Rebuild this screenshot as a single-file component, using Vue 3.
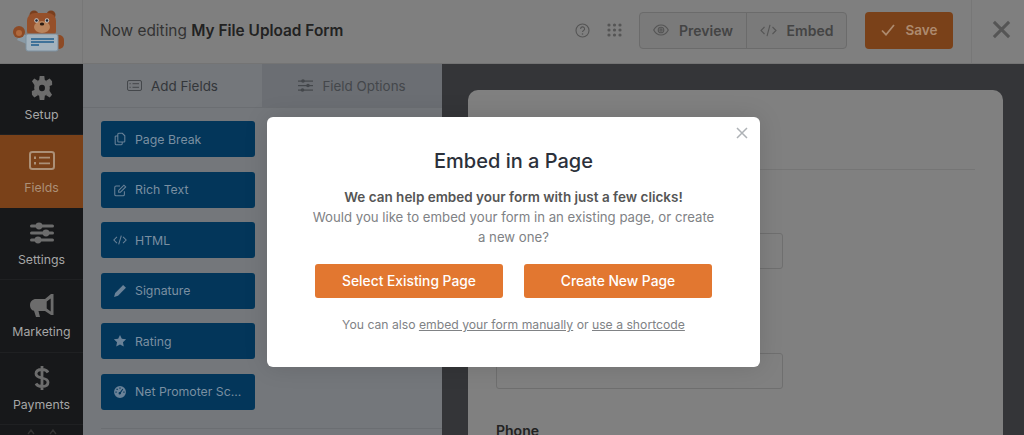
<script setup>
const navItems = [
  { label: 'Setup', icon: 'setup' },
  { label: 'Fields', icon: 'fields', active: true },
  { label: 'Settings', icon: 'settings' },
  { label: 'Marketing', icon: 'marketing' },
  { label: 'Payments', icon: 'payments' },
]

const fields = [
  { label: 'Page Break', d: 'M6.5 1.500h4.200l2.800 2.800v6.200a1 1 0 0 1-1 1h-6a1 1 0 0 1-1-1v-8a1 1 0 0 1 1-1z M5.500 4.500h-2a1 1 0 0 0-1 1v8a1 1 0 0 0 1 1h6a1 1 0 0 0 1-1v-2' },
  { label: 'Rich Text', d: 'M13 9.500v3.500a1.500 1.500 0 0 1-1.500 1.500h-8A1.500 1.500 0 0 1 2 13V5a1.500 1.500 0 0 1 1.500-1.500H8 M6.500 8.500l6-6 2 2-6 6h-2z' },
  { label: 'HTML', d: 'M4.500 4.500L1 8l3.500 3.500 M11.500 4.500L15 8l-3.500 3.500 M9.500 3l-3 10' },
  { label: 'Signature', d: 'M11.600 1.200l3.200 3.200-9.100 9.100-4.500 1.300 1.300-4.500z', solid: true },
  { label: 'Rating', d: 'M8 1l2.100 4.500 4.900.6-3.600 3.400.9 4.900L8 11.900l-4.300 2.500.9-4.900L1 6.100l4.900-.6z', solid: true },
  { label: 'Net Promoter Sc...', d: 'M8 1.200a6.800 6.800 0 1 0 0 13.600A6.800 6.800 0 0 0 8 1.200z M7.300 2.800h1.400v1.400H7.300z M4 4.200h1.400v1.400H4z M2.800 7.500h1.400v1.400H2.800z M11.800 7.500h1.400v1.400h-1.400z M10.800 4.200l.9.700-2.600 4a1.400 1.400 0 1 1-1-.9z', solid: true },
]
</script>

<template>
  <div class="page">
    <header class="topbar">
      <div class="logo">
        <svg width="60" height="48" viewBox="0 0 60 48">
          <path d="M4 32l12 5 3-7-11-5z" fill="#8a9aa5" />
          <circle cx="6" cy="24" r="6" fill="#8d4a25" />
          <circle cx="6" cy="25" r="3" fill="#b06a3e" />
          <rect x="41" y="27" width="10" height="14" rx="5" fill="#8d4a25" />
          <circle cx="21" cy="7" r="4.500" fill="#7a3f1e" />
          <circle cx="38" cy="7" r="4.500" fill="#7a3f1e" />
          <rect x="14" y="5" width="29" height="26" rx="8" fill="#96502a" />
          <ellipse cx="29" cy="19" rx="8" ry="6" fill="#b9845c" />
          <circle cx="23.500" cy="12.500" r="2.200" fill="#c9c9c9" />
          <circle cx="34" cy="12.500" r="2.200" fill="#c9c9c9" />
          <circle cx="23.500" cy="12.500" r="1.300" fill="#1c2430" />
          <circle cx="34" cy="12.500" r="1.300" fill="#1c2430" />
          <ellipse cx="29" cy="16" rx="2.200" ry="1.500" fill="#2a1b12" />
          <rect x="13" y="26" width="32" height="17" rx="2" fill="#a3b2bd" stroke="#7d909f" />
          <path d="M18 31h23M18 34h23M18 37h8" stroke="#1f5d8d" stroke-width="1.400" />
        </svg>
      </div>
      <div class="title">Now editing <strong>My File Upload Form</strong></div>
      <div class="tools">
        <svg class="help" width="15" height="15" viewBox="0 0 15 15">
          <circle cx="7.500" cy="7.500" r="6.500" fill="none" stroke="#555" stroke-width="1.100" />
          <path d="M5.600 5.900a2 2 0 1 1 3 1.700c-.7.4-1.100.8-1.100 1.500" fill="none" stroke="#555" stroke-width="1.100" />
          <circle cx="7.500" cy="11" r=".8" fill="#555" />
        </svg>
        <svg class="apps" width="15" height="14" viewBox="0 0 15 14" fill="#555">
          <circle cx="2" cy="2" r="1.600" /><circle cx="7.500" cy="2" r="1.600" /><circle cx="13" cy="2" r="1.600" />
          <circle cx="2" cy="7" r="1.600" /><circle cx="7.500" cy="7" r="1.600" /><circle cx="13" cy="7" r="1.600" />
          <circle cx="2" cy="12" r="1.600" /><circle cx="7.500" cy="12" r="1.600" /><circle cx="13" cy="12" r="1.600" />
        </svg>
        <div class="btn-group">
          <button class="tool-btn preview">
            <svg width="16" height="12" viewBox="0 0 16 12" fill="none" stroke="#555" stroke-width="1.100">
              <path d="M.7 6C2.400 2.800 5 1 8 1s5.600 1.800 7.300 5C13.600 9.200 11 11 8 11S2.400 9.200.7 6z" />
              <circle cx="8" cy="6" r="2.800" />
              <circle cx="8" cy="6" r="1.100" />
            </svg>
            Preview
          </button>
          <button class="tool-btn embed">
            <svg width="17" height="13" viewBox="0 0 17 13" fill="none" stroke="#555" stroke-width="1.100">
              <path d="M4.500 3L1 6.500 4.500 10M12.500 3L16 6.500 12.500 10M10 .8L7 12.200" />
            </svg>
            Embed
          </button>
        </div>
        <button class="save">
          <svg width="14" height="12" viewBox="0 0 14 12" fill="none" stroke="#ad8a6e" stroke-width="1.800">
            <path d="M1 6.500l4 4.200L13 1" />
          </svg>
          Save
        </button>
      </div>
      <div class="exit">
        <svg width="19" height="19" viewBox="0 0 20 20" stroke="#555" stroke-width="3.200">
          <path d="M2 2l16 16M18 2L2 18" />
        </svg>
      </div>
    </header>

    <div class="builder">
      <nav class="sidebar">
        <div v-for="item in navItems" :key="item.label" class="nav-item" :class="{ active: item.active }">
          <div class="nav-icon">
            <svg v-if="item.icon === 'setup'" width="24" height="26" viewBox="0 0 26 26" preserveAspectRatio="none" fill="#6c6c6c">
              <path fill-rule="evenodd" d="M13 4.500a8.500 8.500 0 1 0 0 17 8.500 8.500 0 0 0 0-17zm0 5.300a3.200 3.200 0 1 1 0 6.400 3.200 3.200 0 0 1 0-6.400z" />
              <path d="M10.500 1h5l.6 4.500h-6.200zM10.500 25h5l.6-4.500h-6.200z" />
              <path d="M2.100 6.200l2.500-2.700 4 2.300-3.100 5.300zM23.900 19.800l-2.500 2.700-4-2.300 3.100-5.300z" />
              <path d="M2.100 19.800l-.1-3.900 3.500-1.200 3.100 5.500-3.900 2.400zM23.900 6.200l.1 3.900-3.500 1.200-3.100-5.500 3.900-2.400z" />
            </svg>
            <svg v-else-if="item.icon === 'fields'" width="26" height="19" viewBox="0 0 26 20" preserveAspectRatio="none" fill="none" stroke="#ac9077" stroke-width="2">
              <rect x="1" y="1" width="24" height="18" rx="2.500" />
              <path d="M10 7h11M10 13h11" />
              <path d="M5 7h2M5 13h2" stroke-width="2.600" />
            </svg>
            <svg v-else-if="item.icon === 'settings'" width="24" height="22" viewBox="0 0 24 22" fill="#6c6c6c">
              <rect y="2.500" width="24" height="3" rx="1.500" />
              <rect y="9.500" width="24" height="3" rx="1.500" />
              <rect y="16.500" width="24" height="3" rx="1.500" />
              <circle cx="9" cy="4" r="3.400" />
              <circle cx="16" cy="11" r="3.400" />
              <circle cx="8" cy="18" r="3.400" />
            </svg>
            <svg v-else-if="item.icon === 'marketing'" width="24" height="23" viewBox="0 0 24 23" fill="#6c6c6c">
              <path fill-rule="evenodd" d="M21 0h2.500v21H21l-6-4H8.500l1.500 6H6l-2-6.300C1.500 16.500 0 14 0 11c0-3.600 2.700-6 6-6h9zm-.300 4.500l-4 3v7l4 3z" />
            </svg>
            <svg v-else width="16" height="26" viewBox="0 0 16 26" fill="none" stroke="#6c6c6c" stroke-width="2.800">
              <path d="M14 7.500C13 5.500 11 4.500 8 4.500 4.500 4.500 2 6 2 8.800c0 6 12 2.400 12 8.400 0 2.800-2.500 4.300-6 4.300-3 0-5-1-6-3M8 1v24" />
            </svg>
          </div>
          <span>{{ item.label }}</span>
        </div>
        <div class="nav-more">
          <svg width="40" height="6" viewBox="0 0 40 6" fill="none" stroke="#333" stroke-width="1.400">
            <path d="M6 5l3-4 3 4M28 5l3-4 3 4" />
          </svg>
        </div>
      </nav>

      <section class="panel">
        <div class="tabs">
          <div class="tab">
            <svg width="15" height="11" viewBox="0 0 15 11" fill="none" stroke="#44474b" stroke-width="1">
              <rect x=".5" y=".5" width="14" height="10" rx="1.500" />
              <path d="M5.500 3.700h6.500M5.500 7.300h6.500M2.500 3.700h1.200M2.500 7.300h1.200" />
            </svg>
            Add Fields
          </div>
          <div class="tab other">
            <svg width="15" height="13" viewBox="0 0 15 13" fill="#44474b">
              <rect y="1.500" width="15" height="1.200" /><rect y="6" width="15" height="1.200" /><rect y="10.500" width="15" height="1.200" />
              <circle cx="5" cy="2" r="1.800" /><circle cx="10" cy="6.500" r="1.800" /><circle cx="4.500" cy="11" r="1.800" />
            </svg>
            Field Options
          </div>
        </div>
        <div class="field-list">
          <div v-for="field in fields" :key="field.label" class="field-btn">
            <svg width="14" height="14" viewBox="0 0 16 16" :fill="field.solid ? '#6a8298' : 'none'" :fill-rule="field.solid ? 'evenodd' : null" :stroke="field.solid ? 'none' : '#6a8298'" stroke-width="1.200">
              <path :d="field.d" />
            </svg>
            <span>{{ field.label }}</span>
          </div>
        </div>
        <div class="panel-rule"></div>
      </section>

      <main class="preview-area">
        <div class="form-card">
          <div class="form-head"></div>
          <div class="input first"></div>
          <div class="input second"></div>
          <div class="phone">Phone</div>
        </div>
      </main>
    </div>

    <div class="overlay">
      <div class="modal">
        <svg class="modal-close" width="12" height="12" viewBox="0 0 12 12" stroke="#aeb2b6" stroke-width="1.500">
          <path d="M1 1l10 10M11 1L1 11" />
        </svg>
        <h2>Embed in a Page</h2>
        <p class="lead">
          <strong>We can help embed your form with just a few clicks!</strong><br />
          Would you like to embed your form in an existing page, or create a new one?
        </p>
        <div class="actions">
          <button class="primary">Select Existing Page</button>
          <button class="primary">Create New Page</button>
        </div>
        <p class="note">You can also <a>embed your form manually</a> or <a>use a shortcode</a></p>
      </div>
    </div>
  </div>
</template>

<style scoped>
.page {
  position: relative;
  width: 1024px;
  height: 435px;
  overflow: hidden;
  font-family: Inter, "Liberation Sans", sans-serif;
  background: #343538;
}

.topbar {
  display: flex;
  align-items: center;
  height: 64px;
  box-sizing: border-box;
  background: #7f7f7f;
  border-bottom: 1px solid #747474;
}

.logo {
  display: flex;
  align-items: center;
  justify-content: center;
  flex: none;
  width: 83px;
  height: 63px;
  box-sizing: border-box;
  padding-left: 4px;
  border-right: 1px solid #777;
}

.title {
  flex: 1;
  padding: 0 0 2px 17px;
  font-size: 15.400px;
  color: #333;
}

.title strong {
  font-weight: 600;
  color: #222;
}

.tools {
  display: flex;
  align-items: center;
  padding-bottom: 3px;
}

.help {
  margin-right: 17px;
}

.apps {
  margin-right: 17px;
}

.btn-group {
  display: flex;
  height: 37px;
  box-sizing: border-box;
  border: 1px solid #6b6b6b;
  border-radius: 4px;
  background: #7a7a7a;
}

.tool-btn {
  display: flex;
  align-items: center;
  justify-content: center;
  gap: 10px;
  height: 100%;
  padding: 0;
  border: 0;
  background: none;
  font: 600 14px Inter, "Liberation Sans", sans-serif;
  color: #444;
}

.tool-btn.preview {
  width: 107px;
  border-right: 1px solid #6b6b6b;
}

.tool-btn.embed {
  width: 99px;
}

.save {
  display: flex;
  align-items: center;
  justify-content: center;
  gap: 11px;
  width: 88px;
  height: 37px;
  margin-left: 18px;
  padding: 0;
  border: 0;
  border-radius: 4px;
  background: #7a4119;
  font: 600 13.500px Inter, "Liberation Sans", sans-serif;
  color: #ad8a6e;
}

.exit {
  display: flex;
  align-items: center;
  justify-content: center;
  width: 53px;
  height: 63px;
  margin-left: 18px;
  padding: 0 0 4px 7px;
  border-left: 1px solid #777;
  box-sizing: border-box;
}

.builder {
  display: flex;
  height: 371px;
}

.sidebar {
  flex: none;
  width: 83px;
  background: #17181a;
}

.nav-item {
  display: flex;
  flex-direction: column;
  align-items: center;
  height: 72.500px;
  box-sizing: border-box;
  border-bottom: 1px solid #1f2022;
  font-size: 12.300px;
  color: #a6a6a6;
}

.nav-item:first-child {
  height: 71px;
}

.nav-item:first-child .nav-icon {
  margin-top: 10px;
}

.nav-item.active {
  background: #7a4119;
  color: #ac9077;
  border-bottom: 0;
}

.nav-icon {
  display: flex;
  align-items: center;
  justify-content: center;
  height: 28px;
  margin: 11px 0 5px;
}

.nav-item.active .nav-icon {
  margin-bottom: 6px;
}

.nav-more {
  display: flex;
  justify-content: center;
  padding-top: 4px;
}

.panel {
  flex: none;
  width: 359px;
  background: #74777b;
}

.tabs {
  display: flex;
  height: 44px;
  box-sizing: border-box;
  border-bottom: 1px solid #6b6e72;
}

.tab {
  display: flex;
  align-items: center;
  justify-content: center;
  gap: 9px;
  width: 179px;
  font-size: 13.400px;
  color: #33363a;
}

.tab.other {
  width: 180px;
  background: #6b6e73;
  color: #44474b;
}

.field-list {
  display: flex;
  flex-direction: column;
  gap: 14.600px;
  padding: 13px 0 18px 18px;
}

.field-btn {
  display: flex;
  align-items: center;
  gap: 8px;
  width: 154px;
  height: 36px;
  box-sizing: border-box;
  padding-left: 12px;
  border-radius: 3px;
  background: #03365a;
  font-size: 12.300px;
  color: #7a8fa1;
}

.panel-rule {
  margin-left: 18px;
  border-top: 1px solid #6b6e72;
}

.preview-area {
  flex: 1;
  padding: 26px 21px 0 26px;
}

.form-card {
  height: 400px;
  box-sizing: border-box;
  padding: 0 28px;
  border-radius: 10px 10px 0 0;
  background: #808080;
}

.form-head {
  height: 79px;
  border-bottom: 1px solid #757575;
}

.input {
  width: 287px;
  height: 36px;
  box-sizing: border-box;
  border: 1px solid #6f6f6f;
  border-radius: 3px;
}

.input.first {
  margin-top: 63px;
}

.input.second {
  margin-top: 84px;
}

.phone {
  margin-top: 33px;
  font-size: 14px;
  font-weight: 600;
  color: #222;
}

.overlay {
  position: absolute;
  inset: 0;
  display: flex;
  align-items: flex-start;
  padding: 117px 0 0 267px;
}

.modal {
  position: relative;
  width: 493px;
  height: 250px;
  box-sizing: border-box;
  padding: 32px 40px 0;
  border-radius: 6px;
  background: #fff;
  box-shadow: 0 0 24px rgba(0, 0, 0, 0.12);
  text-align: center;
}

.modal-close {
  position: absolute;
  top: 10px;
  right: 12px;
}

.modal h2 {
  margin: 0;
  font-size: 20px;
  line-height: 24px;
  font-weight: 500;
  color: #2b303a;
}

.lead {
  margin: 14px 0 0;
  padding: 0 5px;
  font-size: 13.200px;
  line-height: 20px;
  color: #808285;
}

.lead strong {
  font-size: 13.500px;
  font-weight: 600;
  color: #555;
}

.actions {
  display: flex;
  justify-content: center;
  gap: 21px;
  margin-top: 17px;
}

.primary {
  width: 188px;
  height: 34px;
  padding: 0;
  border: 0;
  border-radius: 3px;
  background: #e27730;
  font: 500 13.800px Inter, "Liberation Sans", sans-serif;
  color: #fff;
}

.note {
  margin: 19px 0 0;
  font-size: 12.200px;
  color: #808285;
}

.note a {
  text-decoration: underline;
}
</style>
